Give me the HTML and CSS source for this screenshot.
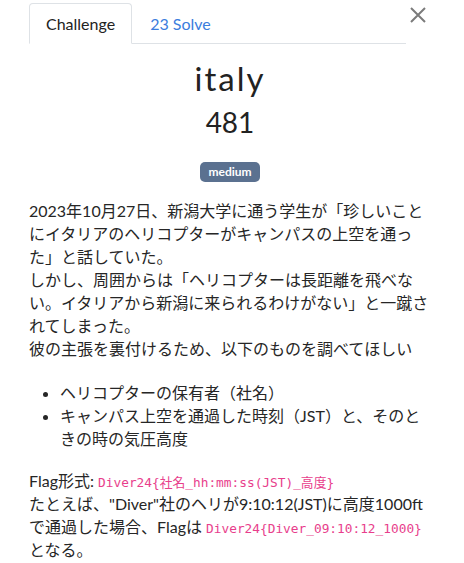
FILE: index.html
```html
<!DOCTYPE html>
<html lang="ja">
<head>
<meta charset="utf-8">
<link rel="stylesheet" href="styles.css">
</head>
<body>
<div class="modal">
  <button class="close" aria-label="Close">
    <svg width="16" height="16" viewBox="0 0 16 16"><path d="M1 1 L15 15 M15 1 L1 15" stroke="#7b7b7b" stroke-width="2" fill="none"/></svg>
  </button>
  <ul class="tabs">
    <li class="tab active">Challenge</li>
    <li class="tab link">23 Solve</li>
  </ul>
  <h2 class="name">italy</h2>
  <h3 class="value">481</h3>
  <div class="tags"><span class="badge">medium</span></div>
  <div class="desc">
    <p>2023年10月27日、新潟大学に通う学生が「珍しいことにイタリアのヘリコプターがキャンパスの上空を通った」と話していた。<br>しかし、周囲からは「ヘリコプターは長距離を飛べない。イタリアから新潟に来られるわけがない」と一蹴されてしまった。<br>彼の主張を裏付けるため、以下のものを調べてほしい</p>
    <ul class="list">
      <li>ヘリコプターの保有者（社名）</li>
      <li>キャンパス上空を通過した時刻（JST）と、そのときの時の気圧高度</li>
    </ul>
    <p>Flag形式: <code>Diver24{社名_hh:mm:ss(JST)_高度}</code><br>たとえば、"Diver"社のヘリが9:10:12(JST)に高度1000ftで通過した場合、Flagは <code>Diver24{Diver_09:10:12_1000}</code> となる。</p>
  </div>
</div>
</body>
</html>
```
FILE: styles.css
```css
* { box-sizing: border-box; }
html, body { margin: 0; padding: 0; background: #fff; }
body {
  font-family: Lato, "Noto Sans CJK JP", sans-serif;
  font-size: 16px;
  color: #262626;
}
.modal {
  position: relative;
  padding: 3px 33px 0 29px;
  width: 464px;
}
.close {
  position: absolute;
  top: 7px;
  left: 410px;
  background: none;
  border: 0;
  padding: 0;
  width: 16px;
  height: 16px;
  line-height: 0;
}
.tabs {
  list-style: none;
  margin: 0 25px 0 0;
  padding: 0;
  display: flex;
  border-bottom: 1px solid #dee2e6;
  height: 41px;
}
.tab {
  height: 41px;
  padding: 0 16px;
  display: flex;
  align-items: center;
  line-height: 1;
  border: 1px solid transparent;
  border-radius: 4px 4px 0 0;
  margin-bottom: -1px;
}
.tab.active {
  border-color: #dee2e6 #dee2e6 #fff;
  color: #222;
  background: #fff;
}
.tab.link { color: #3b7ddd; padding-left: 17px; }
.name {
  margin: 14px 0 0;
  text-align: center;
  font-size: 33px;
  font-weight: 400;
  letter-spacing: 2px;
  line-height: 40px;
  color: #222;
}
.value {
  margin: 6px 0 0;
  text-align: center;
  font-size: 28px;
  font-weight: 400;
  line-height: 36px;
  color: #222;
}
.tags {
  text-align: center;
  margin-top: 20px;
  line-height: 20px;
  height: 20px;
}
.badge {
  display: inline-block;
  background: #5b7190;
  color: #fff;
  font-weight: 700;
  font-size: 12px;
  line-height: 20px;
  padding: 0 8px;
  border-radius: 5px;
}
.desc {
  margin-top: 19px;
  line-height: 23px;
}
.desc p { margin: 0; }
.list {
  margin: 21px 0 19px;
  padding: 0 10px 0 31px;
}
code {
  font-family: "DejaVu Sans Mono", "Noto Sans CJK JP", monospace;
  font-size: 12.8px;
  line-height: 1;
  color: #e83e8c;
}
```
